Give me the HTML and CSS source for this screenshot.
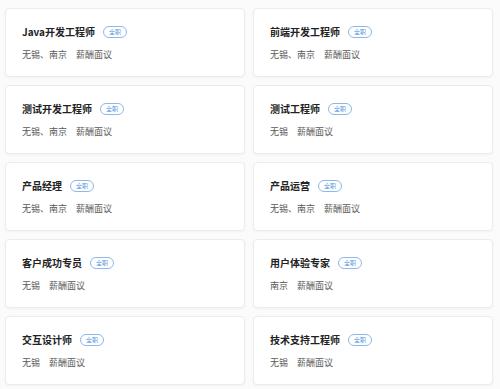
FILE: index.html
```html
<!DOCTYPE html>
<html>
<head>
  <title>职位列表</title>
  <meta charset="UTF-8">
  <meta name="viewport" content="width=device-width, initial-scale=1">
  <link rel="stylesheet" href="styles.css">
</head>
<body>
  <div class="jobs">
    <div class="job">
      <div class="title">Java开发工程师 <span class="tag">全职</span></div>
      <div class="meta"><span>无锡、南京</span><span>薪酬面议</span></div>
    </div>
    <div class="job">
      <div class="title">前端开发工程师 <span class="tag">全职</span></div>
      <div class="meta"><span>无锡、南京</span><span>薪酬面议</span></div>
    </div>
    <div class="job">
      <div class="title">测试开发工程师 <span class="tag">全职</span></div>
      <div class="meta"><span>无锡、南京</span><span>薪酬面议</span></div>
    </div>
    <div class="job">
      <div class="title">测试工程师 <span class="tag">全职</span></div>
      <div class="meta"><span>无锡</span><span>薪酬面议</span></div>
    </div>
    <div class="job">
      <div class="title">产品经理 <span class="tag">全职</span></div>
      <div class="meta"><span>无锡、南京</span><span>薪酬面议</span></div>
    </div>
    <div class="job">
      <div class="title">产品运营 <span class="tag">全职</span></div>
      <div class="meta"><span>无锡、南京</span><span>薪酬面议</span></div>
    </div>
    <div class="job">
      <div class="title">客户成功专员 <span class="tag">全职</span></div>
      <div class="meta"><span>无锡</span><span>薪酬面议</span></div>
    </div>
    <div class="job">
      <div class="title">用户体验专家 <span class="tag">全职</span></div>
      <div class="meta"><span>南京</span><span>薪酬面议</span></div>
    </div>
    <div class="job">
      <div class="title">交互设计师 <span class="tag">全职</span></div>
      <div class="meta"><span>无锡</span><span>薪酬面议</span></div>
    </div>
    <div class="job">
      <div class="title">技术支持工程师 <span class="tag">全职</span></div>
      <div class="meta"><span>无锡</span><span>薪酬面议</span></div>
    </div>
  </div>
</body>
</html>
```

FILE: styles.css
```css
body {
  margin: 0;
  background: #fbfbfb;
  font-family: "Noto Sans CJK SC", "Noto Sans", sans-serif;
}
.jobs {
  display: grid;
  grid-template-columns: 1fr 1fr;
  gap: 8px;
  padding: 8px 7px 8px 5px;
}
.job {
  background: #fff;
  border: 1px solid #ececec;
  border-radius: 4px;
  box-shadow: 0 1px 3px rgba(0, 0, 0, 0.04);
  padding: 16px 16px 0;
  height: 69px;
  box-sizing: border-box;
}
.title {
  display: flex;
  align-items: center;
  font-size: 10px;
  line-height: 14px;
  font-weight: bold;
  color: #222;
}
.tag {
  margin-left: 8px;
  font-size: 6px;
  line-height: 10px;
  font-weight: normal;
  color: #4a8fe0;
  border: 1px solid #8cb8ec;
  border-radius: 6px;
  padding: 0 5px;
}
.meta {
  margin-top: 10px;
  font-size: 9px;
  line-height: 12px;
  color: #5a5a5a;
}
.meta span {
  margin-right: 9px;
}
```
